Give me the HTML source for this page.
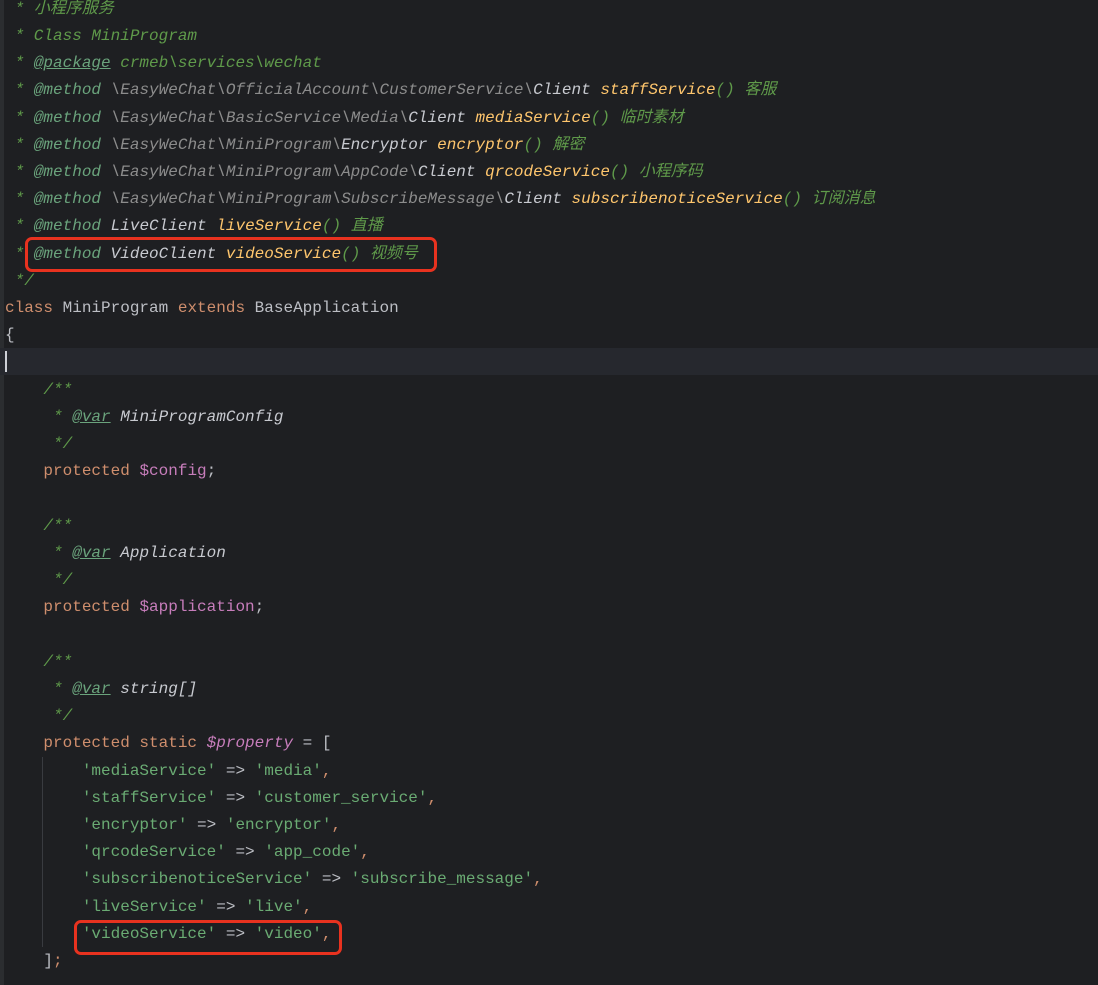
<!DOCTYPE html>
<html><head><meta charset="utf-8"><style>
html,body{margin:0;padding:0}
body{width:1098px;height:985px;background:#1e1f22;overflow:hidden;position:relative;font-family:"Liberation Mono","Noto Sans CJK SC",monospace;font-size:16px;color:#bcbec4}
.gut{position:absolute;left:0;top:0;width:4px;height:985px;background:#2b2d30}
.cur{position:absolute;left:0;top:348px;width:1098px;height:27px;background:#26282e}
.caret{position:absolute;left:5px;top:351px;width:2px;height:21px;background:#ced0d6}
pre{position:absolute;left:5px;top:-4.2px;margin:0;font:inherit;line-height:27.2px;white-space:pre}
.c{color:#5f9a4a;font-style:italic}
.t{color:#6aa37c;font-style:italic;text-decoration:underline}
.tm{color:#6aa37c;font-style:italic}
.g{color:#8c8c8c;font-style:italic}
.w{color:#c8cad0;font-style:italic}
.f{color:#ffc66d;font-style:italic}
.k{color:#cf8e6d}
.v{color:#c77dbb;font-style:italic}
.s{color:#6aab73}
.o{color:#cf8e6d}
.box{position:absolute;border:3px solid #e8321f;border-radius:7px}
.ig{position:absolute;left:42px;top:757px;width:1px;height:190px;background:#393b40}
</style></head><body>
<div class="gut"></div><div class="cur"></div><div class="caret"></div><div class="ig"></div>
<pre><span class="c"> * 小程序服务
 * Class MiniProgram
 * <span class="t">@package</span> crmeb\services\wechat
 * <span class="tm">@method</span> <span class="g">\EasyWeChat\OfficialAccount\CustomerService\</span><span class="w">Client</span> <span class="f">staffService</span>() 客服
 * <span class="tm">@method</span> <span class="g">\EasyWeChat\BasicService\Media\</span><span class="w">Client</span> <span class="f">mediaService</span>() 临时素材
 * <span class="tm">@method</span> <span class="g">\EasyWeChat\MiniProgram\</span><span class="w">Encryptor</span> <span class="f">encryptor</span>() 解密
 * <span class="tm">@method</span> <span class="g">\EasyWeChat\MiniProgram\AppCode\</span><span class="w">Client</span> <span class="f">qrcodeService</span>() 小程序码
 * <span class="tm">@method</span> <span class="g">\EasyWeChat\MiniProgram\SubscribeMessage\</span><span class="w">Client</span> <span class="f">subscribenoticeService</span>() 订阅消息
 * <span class="tm">@method</span> <span class="w">LiveClient</span> <span class="f">liveService</span>() 直播
 * <span class="tm">@method</span> <span class="w">VideoClient</span> <span class="f">videoService</span>() 视频号
 */</span>
<span class="k">class</span> MiniProgram <span class="k">extends</span> BaseApplication
{

    <span class="c">/**
     * <span class="t">@var</span> <span class="w">MiniProgramConfig</span>
     */</span>
    <span class="k">protected</span> <span class="v" style="font-style:normal">$config</span>;

    <span class="c">/**
     * <span class="t">@var</span> <span class="w">Application</span>
     */</span>
    <span class="k">protected</span> <span class="v" style="font-style:normal">$application</span>;

    <span class="c">/**
     * <span class="t">@var</span> <span class="w">string[]</span>
     */</span>
    <span class="k">protected static</span> <span class="v">$property</span> = [
        <span class="s">'mediaService'</span> => <span class="s">'media'</span><span class="o">,</span>
        <span class="s">'staffService'</span> => <span class="s">'customer_service'</span><span class="o">,</span>
        <span class="s">'encryptor'</span> => <span class="s">'encryptor'</span><span class="o">,</span>
        <span class="s">'qrcodeService'</span> => <span class="s">'app_code'</span><span class="o">,</span>
        <span class="s">'subscribenoticeService'</span> => <span class="s">'subscribe_message'</span><span class="o">,</span>
        <span class="s">'liveService'</span> => <span class="s">'live'</span><span class="o">,</span>
        <span class="s">'videoService'</span> => <span class="s">'video'</span><span class="o">,</span>
    ]<span class="o">;</span></pre>
<div class="box" style="left:25px;top:237px;width:406px;height:29px"></div>
<div class="box" style="left:74px;top:920px;width:262px;height:29px"></div>
</body></html>
